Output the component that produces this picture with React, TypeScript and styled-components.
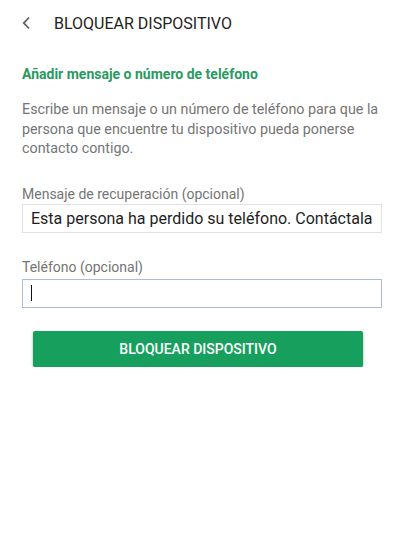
import styled, { createGlobalStyle } from "styled-components";

const GlobalStyle = createGlobalStyle`
  body {
    margin: 0;
    background: #ffffff;
    font-family: Roboto, "Noto Sans", "Liberation Sans", sans-serif;
  }
`;

export default function App() {
  return (
    <>
      <GlobalStyle />
      <SPage>
        <SHeader>
          <SBack>
            <svg width="10" height="14" viewBox="0 0 10 14">
              <polyline
                points="7,1.5 1.8,7 7,12.5"
                fill="none"
                stroke="#5f5f5f"
                strokeWidth="1.8"
              />
            </svg>
          </SBack>
          <STitle>BLOQUEAR DISPOSITIVO</STitle>
        </SHeader>

        <SHeading>Añadir mensaje o número de teléfono</SHeading>

        <SText>
          Escribe un mensaje o un número de teléfono para que la persona que
          encuentre tu dispositivo pueda ponerse contacto contigo.
        </SText>

        <SLabel $top={25}>Mensaje de recuperación (opcional)</SLabel>
        <SField $gap={0}>Esta persona ha perdido su teléfono. Contáctala</SField>

        <SLabel $top={24}>Teléfono (opcional)</SLabel>
        <SField $gap={2} $focused>
          <SCaret />
        </SField>

        <SButton>BLOQUEAR DISPOSITIVO</SButton>
      </SPage>
    </>
  );
}

const SPage = styled.div`
  padding: 0 14px 0 22px;
  display: flex;
  flex-direction: column;
`;

const SHeader = styled.div`
  height: 46px;
  display: flex;
  flex-direction: row;
  align-items: center;
`;

const SBack = styled.div`
  width: 32px;
  display: flex;
  align-items: center;
`;

const STitle = styled.div`
  font-size: 16px;
  color: #222222;
`;

const SHeading = styled.div`
  margin-top: 18px;
  line-height: 20px;
  font-size: 14px;
  font-weight: 700;
  color: #2a9a5f;
`;

const SText = styled.div`
  margin-top: 16px;
  width: 360px;
  line-height: 19.5px;
  font-size: 14.3px;
  color: #757575;
`;

const SLabel = styled.div<{ $top: number }>`
  margin-top: ${(p) => p.$top}px;
  line-height: 20px;
  font-size: 14px;
  color: #757575;
`;

const SField = styled.div<{ $gap: number; $focused?: boolean }>`
  margin-top: ${(p) => p.$gap}px;
  height: 27px;
  width: 342px;
  border: 1px solid ${(p) => (p.$focused ? "#a9bbe3" : "#e2e2e2")};
  padding: 0 8px;
  display: flex;
  align-items: center;
  font-size: 16px;
  color: #1e1e1e;
  white-space: nowrap;
  overflow: hidden;
`;

const SCaret = styled.span`
  width: 1px;
  height: 16px;
  background: #111111;
`;

const SButton = styled.div`
  margin-top: 23px;
  margin-left: 11px;
  width: 330px;
  height: 36px;
  border-radius: 2px;
  background: #17a05d;
  box-shadow: 0 2px 3px rgba(0, 0, 0, 0.35);
  color: #ffffff;
  font-size: 14px;
  font-weight: 500;
  display: flex;
  align-items: center;
  justify-content: center;
`;
